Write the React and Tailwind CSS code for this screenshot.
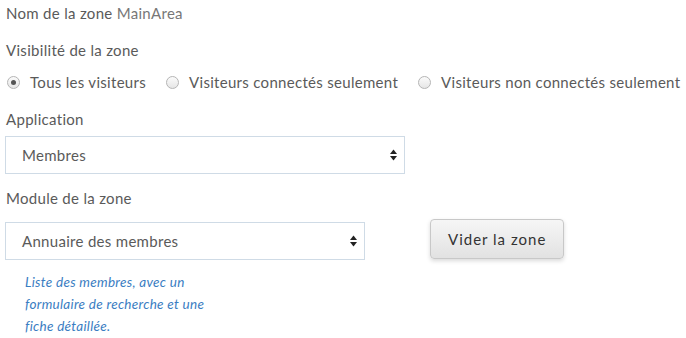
import React from "react";

const Radio = ({ checked, label }) => (
  <label className="flex items-center gap-[10px]">
    <span className="w-[13px] h-[13px] rounded-full border border-[#b5b5b5] bg-gradient-to-b from-[#fbfbfb] to-[#e6e6e6] flex items-center justify-center">
      {checked && <span className="w-[5px] h-[5px] rounded-full bg-[#555]" />}
    </span>
    <span>{label}</span>
  </label>
);

const Arrows = () => (
  <svg width="7" height="12" viewBox="0 0 7 12" className="fill-[#222]">
    <path d="M3.5 0.5 L7 5 H0 Z" />
    <path d="M0 7 H7 L3.5 11.5 Z" />
  </svg>
);

const Select = ({ value, width }) => (
  <div className={`${width} h-[38px] border border-[#cfdbe6] bg-white flex items-center justify-between pl-[16px] pr-[7px]`}>
    <span className="text-[#5a5a5a]">{value}</span>
    <Arrows />
  </div>
);

const App = () => {
  return (
    <div
      className="w-[686px] h-[338px] bg-white text-[15px] tracking-[0.3px] text-[#5a5a5a] pl-[6px] overflow-hidden"
      style={{ fontFamily: "Lato, 'Open Sans', sans-serif" }}
    >
      <div className="pt-[3px] h-[20px] leading-[20px]">
        Nom de la zone <span className="text-[#777]">MainArea</span>
      </div>

      <div className="mt-[20px] leading-[20px]">Visibilité de la zone</div>

      <div className="mt-[12px] flex items-center gap-[20px] leading-[20px] pl-[1px]">
        <Radio checked label="Tous les visiteurs" />
        <Radio label="Visiteurs connectés seulement" />
        <Radio label="Visiteurs non connectés seulement" />
      </div>

      <div className="mt-[17px] leading-[20px]">Application</div>
      <div className="mt-[7px] -ml-[1px]">
        <Select value="Membres" width="w-[400px]" />
      </div>

      <div className="mt-[14px] leading-[20px]">Module de la zone</div>
      <div className="mt-[11px] -ml-[1px] flex items-start gap-[65px]">
        <div className="mt-[3px]">
          <Select value="Annuaire des membres" width="w-[360px]" />
        </div>
        <button className="h-[40px] px-[17px] rounded-[4px] border border-[#c8c8c8] bg-gradient-to-b from-[#f6f6f6] to-[#e2e2e2] shadow-[0_2px_4px_rgba(0,0,0,0.15)] text-[#333] tracking-[1px]">
          Vider la zone
        </button>
      </div>

      <p className="mt-[11px] ml-[19px] w-[196px] text-[13.5px] tracking-[0.3px] leading-[22px] italic text-[#3a7dc2]">
        Liste des membres, avec un formulaire de recherche et une fiche détaillée.
      </p>
    </div>
  );
};

export default App;
